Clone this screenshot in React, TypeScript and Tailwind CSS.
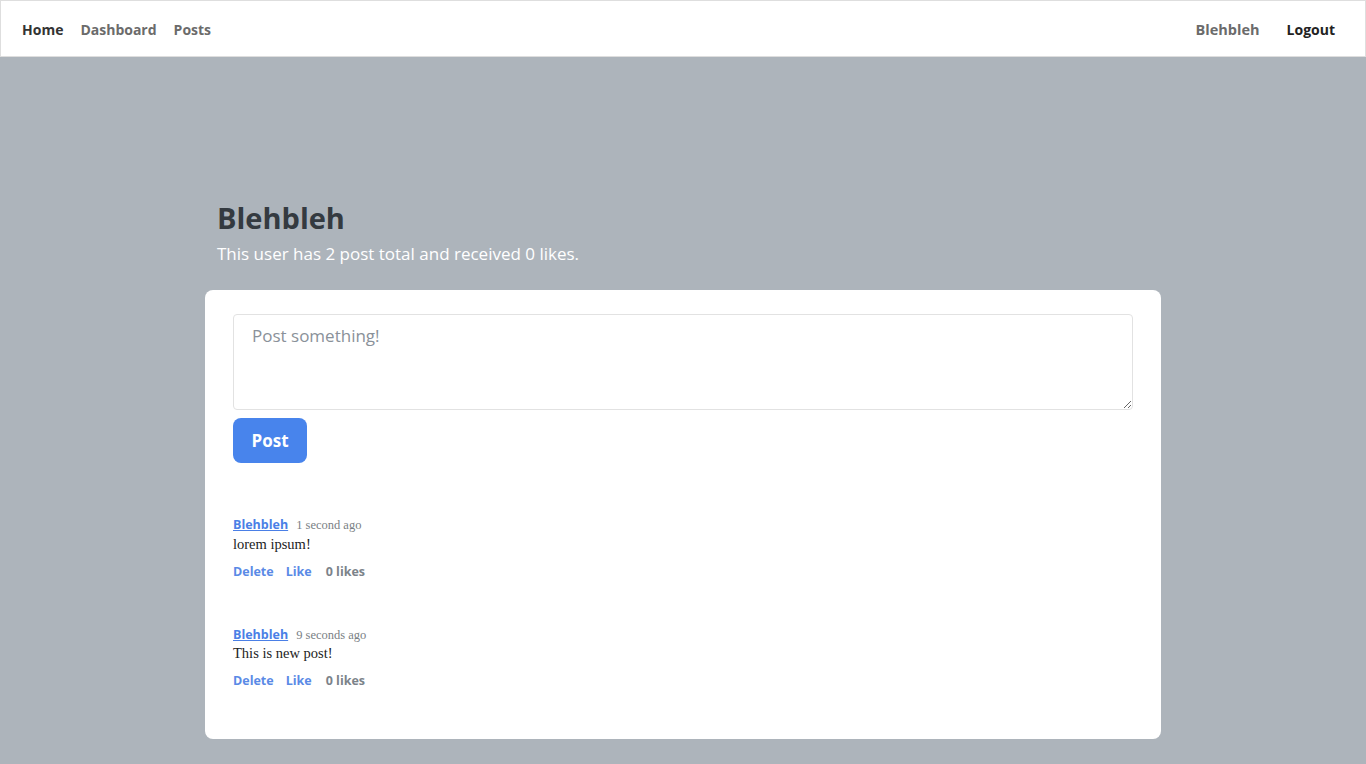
import React from "react";

const sans = "font-['Open_Sans','Noto_Sans',sans-serif]";
const serif = "font-['Liberation_Serif','Georgia',serif]";

function PostItem({ time, text }: { time: string; text: string }) {
  return (
    <div className="mb-[44px]">
      <div className="flex items-baseline gap-[8px]">
        <a className={`${sans} text-[12.5px] font-bold text-[#4a7fe6] underline`}>Blehbleh</a>
        <span className={`${serif} text-[12.5px] text-[#7a7f85]`}>{time}</span>
      </div>
      <p className={`${serif} text-[14.5px] leading-[18px] text-[#222]`}>{text}</p>
      <div className={`${sans} mt-[10px] flex items-center text-[12.5px] font-bold`}>
        <span className="text-[#5a8ae6]">Delete</span>
        <span className="ml-[12px] text-[#5a8ae6]">Like</span>
        <span className="ml-[14px] text-[#7c838a]">0 likes</span>
      </div>
    </div>
  );
}

export default function App() {
  return (
    <div className={`${sans} min-h-[764px] bg-[#adb4bb]`}>
      <nav className="flex h-[57px] items-center justify-between border border-[#dedede] bg-white px-[21px] pt-[2px]">
        <div className="flex items-center gap-[17px] text-[14px] font-bold">
          <span className="text-[#333]">Home</span>
          <span className="text-[#6b6b6b]">Dashboard</span>
          <span className="text-[#6b6b6b]">Posts</span>
        </div>
        <div className="flex items-center gap-[27px] pr-[9px] font-bold">
          <span className="text-[14.5px] text-[#6b6b6b]">Blehbleh</span>
          <span className="text-[14px] text-[#222]">Logout</span>
        </div>
      </nav>
      <div className="mx-auto w-[956px] pt-[143px]">
        <div className="px-[12px]">
          <h1 className="text-[29px] font-bold leading-[36px] text-[#343a40]">Blehbleh</h1>
          <p className="mt-[6px] text-[17px] leading-[24px] text-white">
            This user has 2 post total and received 0 likes.
          </p>
        </div>
        <div className="mt-[24px] rounded-[8px] bg-white px-[28px] pb-[4px] pt-[24px]">
          <textarea
            className="block h-[96px] w-full resize-y rounded-[4px] border border-[#e2e2e2] px-[18px] py-[8px] text-[17px] text-[#333] outline-none placeholder:text-[#8a9199]"
            placeholder="Post something!"
          />
          <button className="mt-[8px] h-[45px] w-[74px] rounded-[8px] bg-[#4884ec] text-[17px] font-bold text-white">
            Post
          </button>
          <div className="mt-[53px]">
            <PostItem time="1 second ago" text="lorem ipsum!" />
            <PostItem time="9 seconds ago" text="This is new post!" />
          </div>
        </div>
      </div>
    </div>
  );
}
